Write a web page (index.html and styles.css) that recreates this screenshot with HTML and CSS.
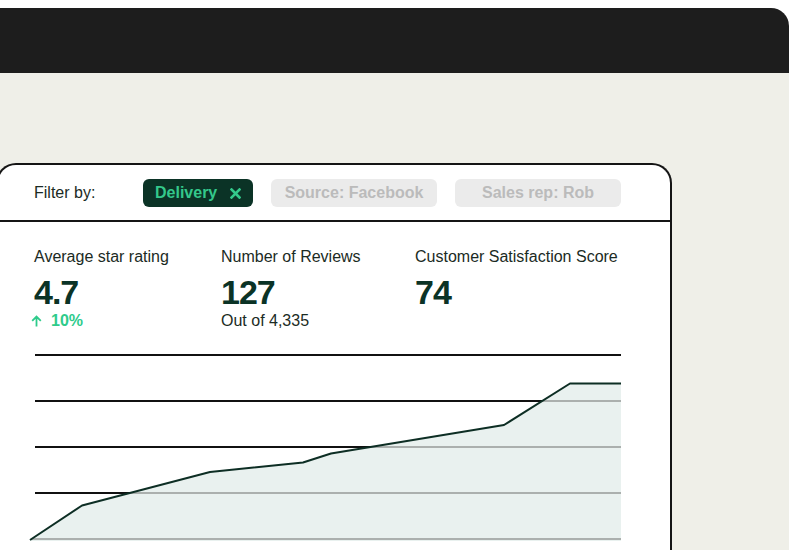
FILE: index.html
```html
<!DOCTYPE html>
<html>
<head>
    <title>Reviews Dashboard</title>

    <link rel="stylesheet" href="styles.css">
</head>
<body>
    <div class="topbar"></div>

    <main class="stage">
        <section class="panel">
            <div class="filters">
                <span class="filters-label">Filter by:</span>
                <span class="chip chip-active">
                    Delivery
                    <svg class="chip-close" width="11" height="11" viewBox="0 0 11 11">
                        <path d="M1.5 1.5 L9.5 9.5 M9.5 1.5 L1.5 9.5" stroke="currentColor" stroke-width="2.6" stroke-linecap="square"/>
                    </svg>
                </span>
                <span class="chip">Source: Facebook</span>
                <span class="chip">Sales rep: Rob</span>
            </div>

            <div class="stats">
                <div class="stat">
                    <div class="stat-label">Average star rating</div>
                    <div class="stat-value">4.7</div>
                    <div class="stat-trend">
                        <svg width="11" height="12" viewBox="0 0 11 12">
                            <path d="M5.5 11.5 V1.5 M1.2 5.8 L5.5 1.5 L9.8 5.8" fill="none" stroke="currentColor" stroke-width="1.8"/>
                        </svg>
                        10%
                    </div>
                </div>
                <div class="stat">
                    <div class="stat-label">Number of Reviews</div>
                    <div class="stat-value">127</div>
                    <div class="stat-note">Out of 4,335</div>
                </div>
                <div class="stat">
                    <div class="stat-label">Customer Satisfaction Score</div>
                    <div class="stat-value">74</div>
                </div>
            </div>

            <svg class="chart" width="600" height="195" viewBox="25 350 600 195">
                <defs>
                    <clipPath id="areaClip">
                        <polygon points="30,540 82,505.5 210,472 303,462.5 331,453.5 504,425 570,383.5 621,383.5 621,541 30,541"/>
                    </clipPath>
                </defs>

                <!-- grid above the series -->
                <g stroke="#111" stroke-width="2">
                    <line x1="35" y1="355" x2="621" y2="355"/>
                    <line x1="35" y1="401" x2="621" y2="401"/>
                    <line x1="35" y1="447" x2="621" y2="447"/>
                    <line x1="35" y1="493" x2="621" y2="493"/>
                </g>

                <polygon class="chart-area" points="30,540 82,505.5 210,472 303,462.5 331,453.5 504,425 570,383.5 621,383.5 621,541 30,541"/>

                <!-- grid seen through the filled area -->
                <g stroke="#abb0ae" stroke-width="2" clip-path="url(#areaClip)">
                    <line x1="35" y1="401" x2="621" y2="401"/>
                    <line x1="35" y1="447" x2="621" y2="447"/>
                    <line x1="35" y1="493" x2="621" y2="493"/>
                    <line x1="30" y1="539" x2="621" y2="539"/>
                </g>

                <polyline class="chart-line" points="30,540 82,505.5 210,472 303,462.5 331,453.5 504,425 570,383.5 621,383.5"/>
            </svg>
        </section>
    </main>
</body>
</html>
```

FILE: styles.css
```css
html, body {
    height: 550px;
    overflow: hidden;
}
body {
    margin: 0;
    background: #fff;
    font-family: "Liberation Sans", Arial, sans-serif;
    color: #1b2b24;
}
.topbar {
    margin-top: 8px;
    width: 789px;
    height: 65px;
    background: #1d1d1d;
    border-top-right-radius: 18px;
}
.stage {
    display: block;
    width: 789px;
    height: 477px;
    padding-top: 90px;
    box-sizing: border-box;
    background: #efefe8;
    overflow: hidden;
}
.panel {
    margin-left: -4px;
    width: 676px;
    height: 400px;
    box-sizing: border-box;
    background: #fff;
    border: 2px solid #151515;
    border-bottom: none;
    border-radius: 20px 20px 0 0;
}
.filters {
    display: flex;
    align-items: center;
    gap: 18px;
    height: 55px;
    padding-left: 36px;
    border-bottom: 2px solid #151515;
}
.filters-label {
    width: 91px;
    font-size: 16px;
}
.chip {
    display: flex;
    align-items: center;
    justify-content: center;
    width: 166px;
    height: 28px;
    border-radius: 6px;
    background: #ebebeb;
    color: #bbbbbb;
    font-size: 16px;
    font-weight: bold;
}
.chip-active {
    width: 110px;
    justify-content: flex-start;
    padding: 0 12px;
    box-sizing: border-box;
    background: #0b3326;
    color: #34c98b;
}
.chip-close {
    margin-left: auto;
    margin-top: 2px;
}
.stats {
    display: grid;
    grid-template-columns: 187px 194px 1fr;
    padding: 25px 0 0 36px;
    height: 103px;
    box-sizing: border-box;
}
.stat-label {
    font-size: 16px;
    line-height: 20px;
}
.stat-value {
    margin-top: 6px;
    font-size: 34px;
    line-height: 38px;
    font-weight: bold;
    letter-spacing: -1px;
    color: #0b3326;
}
.stat-trend {
    display: flex;
    align-items: center;
    gap: 9px;
    font-size: 16px;
    line-height: 20px;
    font-weight: bold;
    color: #2ecb8b;
    margin-left: -3px;
}
.stat-note {
    font-size: 16px;
    line-height: 20px;
}
.chart {
    display: block;
    margin: 25px 0 0 27px;
}
.chart-area {
    fill: #e9f1ef;
}
.chart-line {
    fill: none;
    stroke: #0d2e24;
    stroke-width: 2;
    stroke-linejoin: round;
}
```
